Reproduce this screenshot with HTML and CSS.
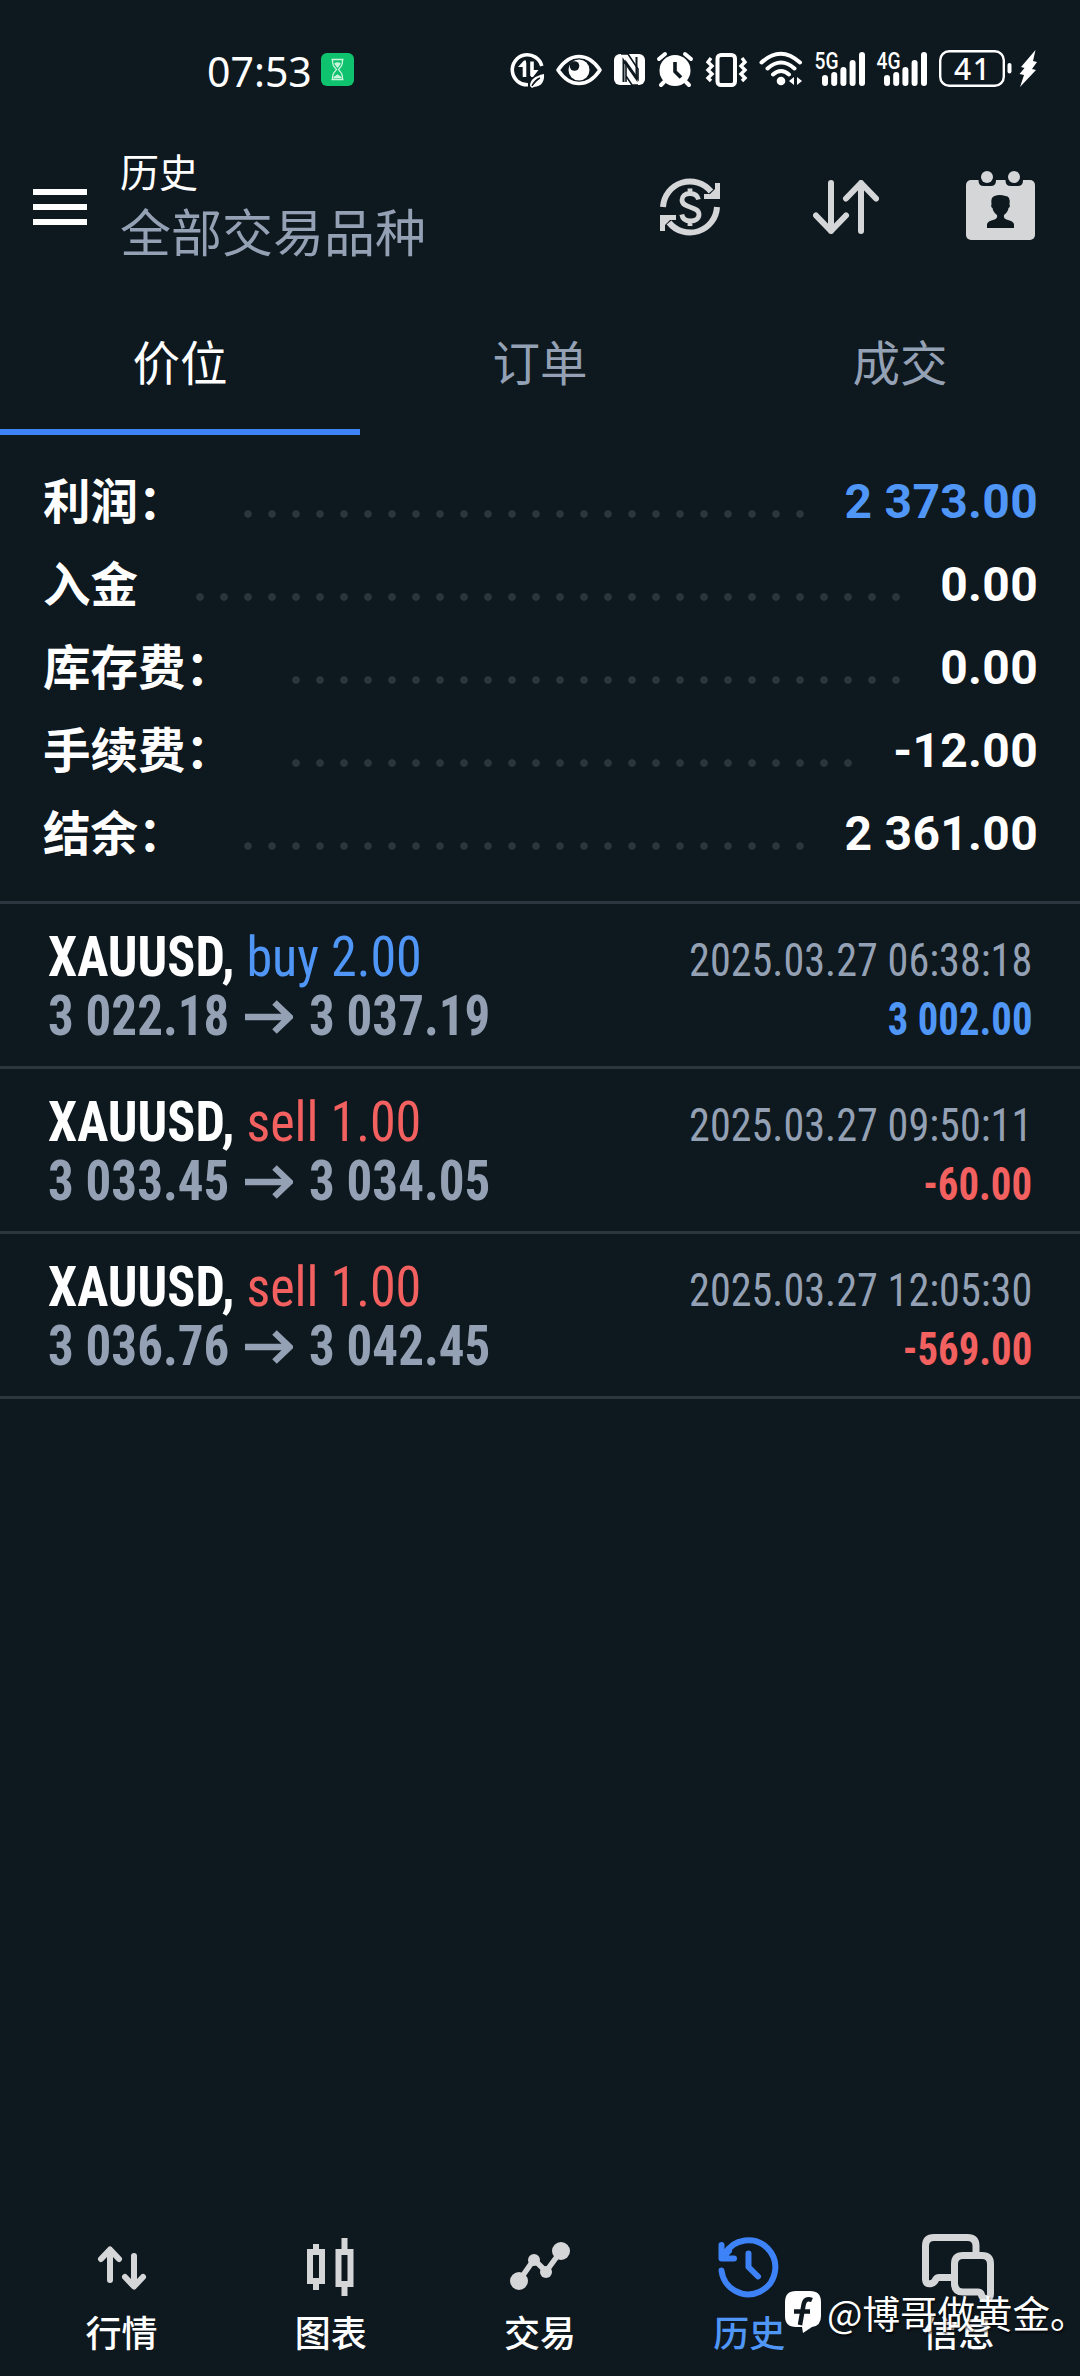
FILE: index.html
```html
<!DOCTYPE html>
<html lang="zh-CN">
<head>
<meta charset="utf-8">
<title>历史</title>
<link rel="stylesheet" href="styles.css">
</head>
<body>
<div class="screen">
  <div class="status">
    <span class="status__time">07:53</span>
    <span class="status__badge">
      <svg width="33" height="33" viewBox="0 0 33 33" fill="none" stroke="#c9f5dc" stroke-width="1.3" stroke-linejoin="round"><path d="M10.5 6.500h12M10.500 26.500h12M11.500 7c0 5 1 6 4 9.500c-3 3.500-4 4.500-4 9.500M21.500 7c0 5-1 6-4 9.500c3 3.500 4 4.500 4 9.500"/><path fill="#c9f5dc" d="M14 10.500q2.500-1 5 0l-2.500 3.500zM13 24.500l3.500-2.500 3.500 2.500z"/></svg>
    </span>
    <div class="status__icons">
      <svg width="46" height="44" viewBox="504 48 46 44"><g fill="none" stroke="#fff" stroke-width="3.600"><path d="M541.800 66A15 15 0 1 0 528 84.800"/><path d="M524.500 77V62.500M532 61.500v14.500"/></g><path fill="#fff" d="M518 67l6-6.500h2V67zM538.500 70l-5.500 7h-2v-7zM530 86q0-9 14-12q1 12-10 13l-2 1z"/><path d="M532 86q3-6 8-8" stroke="#0e181f" stroke-width="1.500"/></svg>
      <svg width="58" height="44" viewBox="550 48 58 44"><path d="M558 70q9-13.500 21-13.500t21 13.500q-9 13.500-21 13.500t-21-13.500z" fill="none" stroke="#fff" stroke-width="3.600" stroke-linejoin="round"/><circle cx="579" cy="70" r="10.500" fill="#fff"/><circle cx="574.500" cy="66" r="4.800" fill="#0e181f"/></svg>
      <svg width="43" height="44" viewBox="608 48 43 44"><rect x="614" y="54" width="31" height="31" rx="6" fill="#fff"/><path d="M623.500 82V60.500l13 18.500V57" fill="none" stroke="#0e181f" stroke-width="2"/><path d="M621 54l7 0 10 15v10l-12-17v20M638 85h-6l-6-9" fill="none" stroke="#0e181f" stroke-width="1.600"/></svg>
      <svg width="48" height="44" viewBox="651 48 48 44"><circle cx="675" cy="70.500" r="15.500" fill="#fff"/><path d="M659 59l6-5M691 59l-6-5M664 82l-3 3M686 82l3 3" stroke="#fff" stroke-width="4" stroke-linecap="round"/><path d="M675 62v9.500l6 6" fill="none" stroke="#0e181f" stroke-width="3.600"/></svg>
      <svg width="55" height="44" viewBox="699 48 55 44" fill="none" stroke="#fff"><rect x="717.500" y="55" width="17.500" height="30" rx="3.500" stroke-width="4"/><path d="M711 58l-3 4 4 4-4 4 4 4-4 4 3 3M742 58l3 4-4 4 4 4-4 4 4 4-3 3" stroke-width="3.400"/></svg>
      <svg width="55" height="44" viewBox="754 48 55 44"><g fill="none" stroke="#fff" stroke-width="4" stroke-linecap="round"><path d="M761.500 62.500q19-17.500 38.500 0M767.500 68.500q13.500-12 27 0M773 74.500q8-7 16 0"/></g><circle cx="781" cy="81" r="4.300" fill="#fff"/><path fill="#fff" d="M794 77v8l-5-4zM797 77v8l5-4z"/></svg>
      <svg class="sig" width="62" height="44" viewBox="809 48 62 44"><text x="814.500" y="68.500" textLength="24" lengthAdjust="spacingAndGlyphs">5G</text><path d="M825 78v5M834.200 75v8M843.400 70v13M852.600 63v20M862 55v28"/></svg>
      <svg class="sig" width="62" height="44" viewBox="871 48 62 44"><text x="876.500" y="68.500" textLength="24" lengthAdjust="spacingAndGlyphs">4G</text><path d="M887 78v5M896.200 75v8M905.400 70v13M914.600 63v20M924 55v28"/></svg>
      <svg width="81" height="44" viewBox="933 48 81 44"><rect x="940.200" y="51.200" width="63.600" height="34.600" rx="9" fill="none" stroke="#fff" stroke-width="2.400"/><rect x="1007.500" y="63" width="4" height="10.500" rx="2" fill="#fff"/><text class="batt" x="954" y="79.500" textLength="36">41</text></svg>
      <svg width="28" height="44" viewBox="1014 48 28 44"><path d="M1035.500 50L1021 67l3.500 1-5 6 4.500 1-4 12 16-17-4-1 5-7-4-1z" fill="#fff"/></svg>
    </div>
  </div>

  <header class="header">
    <div class="menu"><i></i><i></i><i></i></div>
    <div class="header__text">
      <div class="header__title">历史</div>
      <div class="header__sub">全部交易品种</div>
    </div>
    <div class="header__actions">
      <svg width="60" height="60" viewBox="0 0 60 60" fill="none" stroke="#d5d6d8"><path d="M3 30A27 27 0 0 1 51 14.500M57 30A27 27 0 0 1 9 45.500" stroke-width="6"/><path d="M60 6v16H44v-5h6l5-5V6zM0 54V38h16v5h-6l-5 5v6z" fill="#d5d6d8" stroke="none"/><path d="M38.500 22.500c-1-4-4.500-6-8.500-6-5 0-8 2.800-8 6.500 0 9 17 5.500 17 14.500 0 4-3.500 6.500-8.500 6.500s-8-2.500-8.700-6.500M30 11.500v6M30 43v6" stroke-width="4.800"/></svg>
      <svg width="66" height="54" viewBox="0 0 66 54" fill="none" stroke="#d5d6d8" stroke-width="6" stroke-linecap="round" stroke-linejoin="round"><path d="M18 3v48M3 35.500l15 15.500 15-15.500M48 51V3M33 18.500L48 3l15 15.500"/></svg>
      <svg width="69" height="69" viewBox="0 0 69 69"><rect y="9" width="69" height="60" rx="5" fill="#d5d6d8"/><path d="M12.500 8h17.500v1.500q0 5.500-5.500 5.500h-6.500q-5.500 0-5.500-5.500zM39.500 8h17.500v1.500q0 5.500-5.500 5.500h-6.500q-5.500 0-5.500-5.500z" fill="#0e181f"/><circle cx="21" cy="6" r="6" fill="#d5d6d8"/><circle cx="48" cy="6" r="6" fill="#d5d6d8"/><path d="M21 57v-4q1-3 6-4 5-1 4-5-4-3-4.500-7-2-1-1-4-1-7 3-8 5-2 11 0 5 0 4 8 1 3-1 4-.5 4-4.500 7-1 4 4 5 5 1 6 4v4z" fill="#0e181f"/></svg>
    </div>
  </header>

  <nav class="tabs">
    <div class="tab tab--on">价位</div>
    <div class="tab">订单</div>
    <div class="tab">成交</div>
  </nav>

  <section class="summary">
    <div class="row"><span class="row__label">利润：</span><span class="row__dots"></span><span class="row__val up">2 373.00</span></div>
    <div class="row"><span class="row__label row__label--s">入金</span><span class="row__dots row__dots--l"></span><span class="row__val">0.00</span></div>
    <div class="row"><span class="row__label row__label--l">库存费：</span><span class="row__dots row__dots--m"></span><span class="row__val">0.00</span></div>
    <div class="row"><span class="row__label row__label--l">手续费：</span><span class="row__dots"></span><span class="row__val">-12.00</span></div>
    <div class="row"><span class="row__label">结余：</span><span class="row__dots"></span><span class="row__val">2 361.00</span></div>
  </section>

  <section class="trades">
    <article class="trade">
      <div class="trade__line"><div class="trade__main"><b>XAUUSD,</b> <span class="up">buy 2.00</span></div><div class="trade__date">2025.03.27 06:38:18</div></div>
      <div class="trade__line"><div class="trade__price"><span>3 022.18</span><svg class="arrow" viewBox="0 0 48 34"><path d="M0 17h44M29.500 2.500L44.500 17l-15 14.500"/></svg><span>3 037.19</span></div><div class="trade__pl up">3 002.00</div></div>
    </article>
    <article class="trade">
      <div class="trade__line"><div class="trade__main"><b>XAUUSD,</b> <span class="down">sell 1.00</span></div><div class="trade__date">2025.03.27 09:50:11</div></div>
      <div class="trade__line"><div class="trade__price"><span>3 033.45</span><svg class="arrow" viewBox="0 0 48 34"><path d="M0 17h44M29.500 2.500L44.500 17l-15 14.500"/></svg><span>3 034.05</span></div><div class="trade__pl down">-60.00</div></div>
    </article>
    <article class="trade">
      <div class="trade__line"><div class="trade__main"><b>XAUUSD,</b> <span class="down">sell 1.00</span></div><div class="trade__date">2025.03.27 12:05:30</div></div>
      <div class="trade__line"><div class="trade__price"><span>3 036.76</span><svg class="arrow" viewBox="0 0 48 34"><path d="M0 17h44M29.500 2.500L44.500 17l-15 14.500"/></svg><span>3 042.45</span></div><div class="trade__pl down">-569.00</div></div>
    </article>
  </section>

  <nav class="bottom">
    <div class="item"><svg width="72" height="72" viewBox="0 0 72 72" fill="none" stroke="#d5d6d8" stroke-width="6" stroke-linecap="round" stroke-linejoin="round"><path d="M24 48V18M15 27l9-9.500 9 9.500M48 24v30M39 45l9 9.500 9-9.500"/></svg><span>行情</span></div>
    <div class="item"><svg width="72" height="72" viewBox="0 0 72 72" fill="none" stroke="#d5d6d8" stroke-width="6"><path d="M15 20h12v29H15zM43.500 20h12v32h-12zM21 12v6M21 50v8M49.500 6v12M49.500 53v11"/></svg><span>图表</span></div>
    <div class="item"><svg width="72" height="72" viewBox="0 0 72 72"><path d="M15 49l15-21.500 12 12L57 19" fill="none" stroke="#d5d6d8" stroke-width="5.500"/><g fill="#d5d6d8"><circle cx="15" cy="49" r="9"/><circle cx="30" cy="28" r="6"/><circle cx="42" cy="40" r="6"/><circle cx="57" cy="19" r="9"/></g></svg><span>交易</span></div>
    <div class="item item--on"><svg width="72" height="72" viewBox="0 0 72 72" fill="none" stroke="#3d83f7" stroke-width="6" stroke-linecap="round" stroke-linejoin="round"><path d="M8.500 38.500a27 27 0 1 0 3-16M8.500 13v13.500H21M9 26l7-7M35.500 21.500V35l9.500 9.500"/></svg><span>历史</span></div>
    <div class="item"><svg width="72" height="72" viewBox="0 0 72 72" fill="none" stroke="#d5d6d8" stroke-width="7" stroke-linejoin="round"><path d="M54 21v-7q0-8.500-8.500-8.500H12q-8.500 0-8.500 8.500v33q0 6 6 4.500 3-1 4.500-4.500 1-1.500 3-1.500h13"/><path d="M41 23.500h19q8.500 0 8.500 8.500v30q0 5-4.500 4.500-4 0-5-5-1-1.500-3-1.500H41q-8.500 0-8.500-8.500V32q0-8.500 8.500-8.500z"/></svg><span>信息</span></div>
  </nav>

  <div class="mark">
    <svg width="40" height="44" viewBox="0 0 40 44"><path d="M12 1h14q11 0 11 11v14q0 10-9 11l-9 6-1-6h-6Q1 37 1 26V12Q1 1 12 1z" fill="#fff"/><path d="M28 10q-7-3-8.500 5L16 35M10 21.500h16" fill="none" stroke="#0e181f" stroke-width="4.500"/></svg>
    <span>@博哥做黄金。</span>
  </div>
</div>
</body>
</html>
```
FILE: styles.css
```css
* { box-sizing: border-box; }
body {
  margin: 0;
  background: #0e181f;
  color: #fff;
  font-family: Roboto, "Noto Sans CJK SC", sans-serif;
}
.screen {
  position: relative;
  width: 1080px;
  height: 2376px;
  overflow: hidden;
  display: flex;
  flex-direction: column;
}
svg { display: block; flex: none; }
.up { color: #4f96f6; }
.down { color: #f2605f; }

/* status bar */
.status { height: 140px; padding: 48px 38px 0 207px; display: flex; align-items: flex-start; }
.status__time { width: 114px; font: 41px/46px "Noto Sans", sans-serif; white-space: nowrap; }
.status__badge { margin-top: 5px; width: 33px; height: 33px; border-radius: 6px; background: #0fc36e; }
.status__icons { margin-left: auto; display: flex; }
.sig text { font: 500 23px Roboto, sans-serif; fill: #fff; stroke: none; }
.sig path { fill: none; stroke: #fff; stroke-width: 6; stroke-linecap: round; }
.batt { font: 500 30px "Noto Sans", sans-serif; fill: #fff; }

/* header */
.header { height: 145px; padding: 0 45px 0 33px; display: flex; align-items: flex-start; }
.menu { width: 54px; padding-top: 49px; display: grid; gap: 9px; }
.menu i { height: 6px; background: #fff; }
.header__text { margin-left: 33px; padding-top: 11px; }
.header__title { font-size: 39px; line-height: 46px; }
.header__sub { font-size: 51px; line-height: 76px; color: #94a1b4; }
.header__actions { margin-left: auto; height: 134px; display: flex; align-items: center; }
.header__actions svg:nth-child(2) { margin: 0 87px 0 93px; }
.header__actions svg:nth-child(3) { margin-top: -3px; }

/* tabs */
.tabs { display: flex; height: 150px; }
.tab { flex: 1; padding-top: 40px; text-align: center; font-size: 47.500px; line-height: 80px; color: #94a1b4; border-bottom: 6px solid transparent; }
.tab--on { color: #fff; border-color: #3d83f7; }

/* account totals */
.summary { height: 466px; padding: 25px 42px 0 43px; }
.row { height: 83px; display: flex; align-items: center; font-size: 48px; font-weight: 700; white-space: nowrap; }
.row__label { width: 193px; padding-bottom: 7px; font-size: 47.500px; }
.row__label--s { width: 145px; }
.row__label--l { width: 241px; }
.row__dots { width: 576px; height: 8px; margin-top: 24px; background: radial-gradient(circle at center, #2b353e 3.400px, transparent 4.200px) 0 0 / 24px 8px; }
.row__dots--l { width: 720px; }
.row__dots--m { width: 624px; }
.row__val { margin-left: auto; letter-spacing: .3px; }

/* deals */
.trade { height: 165px; padding: 24px 48px 0; border-top: 3px solid #2c363e; }
.trade:last-child { height: 168px; border-bottom: 3px solid #2c363e; }
.trade__line { height: 59px; display: flex; justify-content: space-between; align-items: baseline; line-height: 59px; font-family: "Roboto Condensed", Roboto, sans-serif; font-stretch: 75%; white-space: nowrap; }
.trade__main, .trade__price { font-size: 55px; }
.trade__main { transform: scaleX(.947); transform-origin: left; }
.trade__price { display: flex; align-items: baseline; font-weight: 700; color: #94a1b4; }
.trade__price span { transform: scaleX(.928); transform-origin: left; margin-right: -14px; }
.trade__date, .trade__pl { font-size: 46px; transform-origin: right; }
.trade__date { color: #94a1b4; transform: scaleX(.917); }
.trade__pl { font-weight: 700; transform: scaleX(.885); }
.arrow { width: 48px; height: 34px; margin: 0 16px; align-self: center; fill: none; stroke: #94a1b4; stroke-width: 6.500; }

/* bottom navigation */
.bottom { margin-top: auto; height: 146px; padding: 0 17px; display: flex; }
.item { flex: 1; display: flex; flex-direction: column; align-items: center; padding-top: 2px; font: 500 36px/46px KaiTi, STKaiti, "Noto Sans CJK SC", sans-serif; }
.item span { margin-top: 4px; }
.item--on { color: #4f96f6; }

/* author tag floating over the navigation */
.mark { position: absolute; left: 784px; top: 2284px; display: flex; align-items: center; gap: 3px; font: 37.500px/56px "Noto Sans CJK SC", sans-serif; white-space: nowrap; text-shadow: 1px 2px 2px rgba(0,0,0,.7); }
```
